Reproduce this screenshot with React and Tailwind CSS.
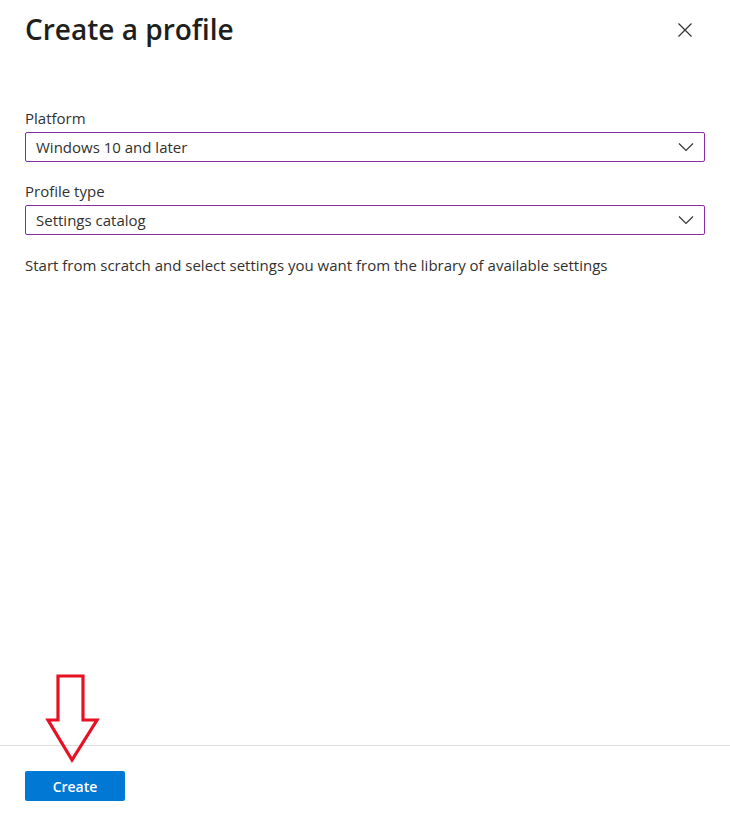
import React from 'react';

function Chevron() {
    return (
        <svg width="16" height="10" viewBox="0 0 16 10" fill="none">
            <path d="M1 1.5 L8 8.5 L15 1.5" stroke="#323130" strokeWidth="1.1" />
        </svg>
    );
}

function SelectBox({ value }) {
    return (
        <div className="flex h-[30px] items-center justify-between rounded-[2px] border border-[#8a2da5] pl-[10px] pr-[10px] text-[15px] text-[#323130]">
            <span>{value}</span>
            <Chevron />
        </div>
    );
}

export default function App() {
    return (
        <div className="relative flex min-h-[834px] w-[730px] flex-col bg-white font-['Open_Sans',sans-serif] text-[#323130]">
            <div className="flex-1 px-[25px]">
                <div className="flex items-start justify-between pt-[9px]">
                    <h1 className="text-[28px] font-semibold leading-[40px] text-[#201f1e]">Create a profile</h1>
                    <button type="button" className="mr-[12px] mt-[13px]">
                        <svg width="16" height="16" viewBox="0 0 16 16">
                            <path d="M1.5 1.5 L14.5 14.5 M14.5 1.5 L1.5 14.5" stroke="#323130" strokeWidth="1.2" />
                        </svg>
                    </button>
                </div>

                <div className="mt-[60px]">
                    <label className="mb-[5px] block text-[15px] leading-[18px]">Platform</label>
                    <SelectBox value="Windows 10 and later" />
                </div>

                <div className="mt-[20px]">
                    <label className="mb-[5px] block text-[15px] leading-[18px]">Profile type</label>
                    <SelectBox value="Settings catalog" />
                </div>

                <p className="mt-[20px] text-[15px] leading-[20px]">
                    Start from scratch and select settings you want from the library of available settings
                </p>
            </div>

            <div className="h-[89px] border-t border-[#e1dfdd] px-[25px] pt-[25px]">
                <button type="button" className="h-[30px] w-[100px] rounded-[2px] bg-[#0078d4] text-[14px] font-semibold text-white">
                    Create
                </button>
            </div>

            <svg className="absolute left-[44px] top-[672px]" width="58" height="94" viewBox="0 0 58 94">
                <path d="M14 4 L39 4 L39 48 L53 48 L28 88 L4 48 L14 48 Z" fill="none" stroke="#e81123" strokeWidth="3.2" strokeLinejoin="miter" />
            </svg>
        </div>
    );
}
